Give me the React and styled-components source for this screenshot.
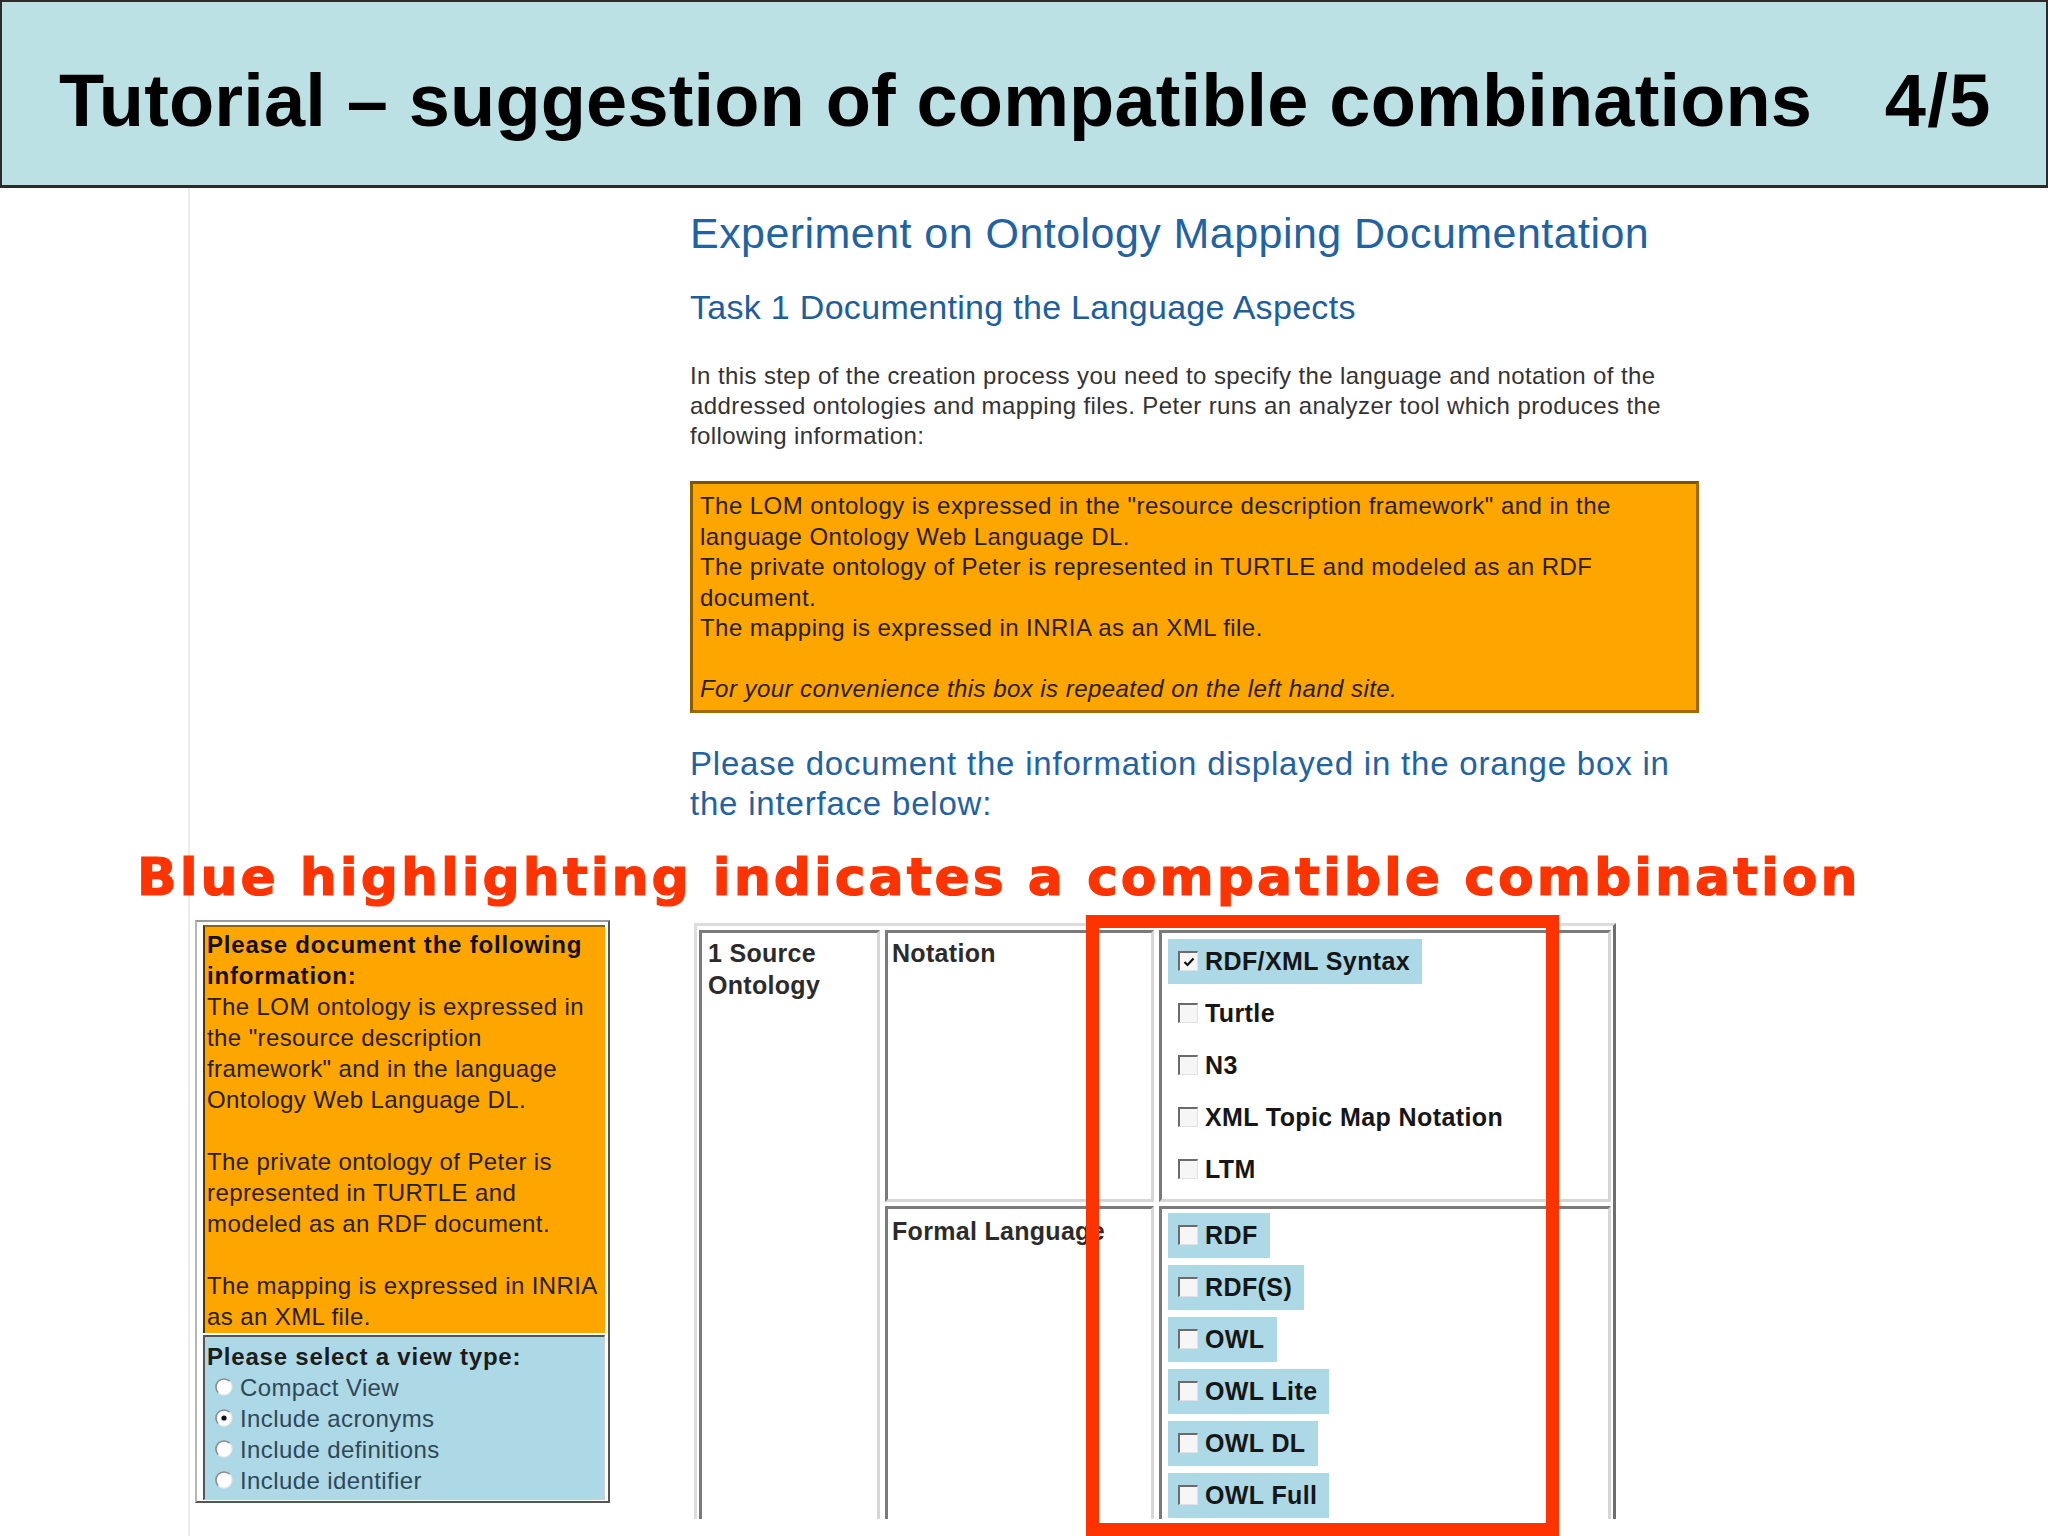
import React from "react";
import styled, { createGlobalStyle } from "styled-components";

const GlobalStyle = createGlobalStyle`
  html, body {
    margin: 0;
    padding: 0;
    background: #fff;
  }
  body {
    width: 2048px;
    height: 1536px;
    overflow: hidden;
    font-family: "Liberation Sans", Arial, sans-serif;
  }
`;

const Header = styled.header`
  box-sizing: border-box;
  height: 188px;
  background: #bbe1e4;
  border: 2px solid #2b2b2b;
  border-bottom-width: 3px;
  padding: 62px 54px 0 57px;
  display: flex;
  justify-content: space-between;
  align-items: flex-start;
`;

const Title = styled.h1`
  margin: 0;
  font: 700 74px/74px "Liberation Sans", Arial, sans-serif;
  letter-spacing: ${(p) => p.$ls || "0"};
  color: #000;
  white-space: nowrap;
`;

const Main = styled.main`
  box-sizing: border-box;
  height: 1348px;
  padding-top: 20px;
  background: linear-gradient(
    to right,
    transparent 188px,
    #ececec 188px,
    #ececec 190px,
    transparent 190px
  );
`;

const Intro = styled.section`
  margin-left: 690px;
  width: 1020px;
`;

const PageTitle = styled.h2`
  margin: 0;
  font: 400 43px/50px "Liberation Sans", Arial, sans-serif;
  letter-spacing: 0.45px;
  color: #1f63a3;
  white-space: nowrap;
`;

const TaskTitle = styled.h3`
  margin: 30px 0 0;
  font: 400 34px/38px "Liberation Sans", Arial, sans-serif;
  letter-spacing: 0.3px;
  color: #1d5e9c;
  white-space: nowrap;
`;

const Lead = styled.div`
  margin-top: 35px;
  font: 400 24px/30px "Liberation Sans", Arial, sans-serif;
  letter-spacing: 0.4px;
  color: #333;
`;

const Line = styled.div`
  white-space: nowrap;
  font-style: ${(p) => (p.$italic ? "italic" : "normal")};
`;

const InfoBox = styled.div`
  box-sizing: border-box;
  width: 1009px;
  margin-top: 30px;
  background: #ffa500;
  border: 3px solid;
  border-color: #7d5300 #a06a00 #a06a00 #8a5c00;
  padding: 7px 8px 5px 7px;
  font: 400 24px/30.5px "Liberation Sans", Arial, sans-serif;
  letter-spacing: 0.45px;
  color: #262000;
`;

const Prompt = styled.div`
  margin-top: 31px;
  font: 400 33px/40px "Liberation Sans", Arial, sans-serif;
  letter-spacing: 0.8px;
  color: #1f63a3;
`;

const Callout = styled.div`
  margin: 23px 0 0 137px;
  font: 700 52px/60px "DejaVu Sans", "Liberation Sans", sans-serif;
  letter-spacing: 3px;
  color: #ff3300;
  -webkit-text-stroke: 1.2px #ff3300;
  white-space: nowrap;
`;

const LowerRow = styled.div`
  display: flex;
  align-items: flex-start;
  gap: 84px;
  margin-top: 13px;
  padding-left: 195px;
`;

/* left hand copy of the info box */
const Panel = styled.div`
  box-sizing: border-box;
  width: 415px;
  border: 2px solid;
  border-color: #9a9a9a #555 #555 #b5b5b5;
  padding: 3px 3px 1px 6px;
  display: flex;
  flex-direction: column;
  gap: 2px;
`;

const OrangeCell = styled.div`
  background: #ffa500;
  border-top: 2px solid #8a6510;
  border-left: 2px solid #4d3a00;
  padding: 2px 2px 1px;
  font: 400 24px/31px "Liberation Sans", Arial, sans-serif;
  letter-spacing: 0.4px;
  color: #262000;
`;

const BlueCell = styled.div`
  background: #add8e6;
  border-top: 2px solid #555;
  border-left: 2px solid #555;
  border-right: 1px solid #d0d0d0;
  border-bottom: 1px solid #d0d0d0;
  padding: 4px 2px 3px;
  font: 400 24px/31px "Liberation Sans", Arial, sans-serif;
  letter-spacing: 0.4px;
  color: #2f4856;
`;

const Strong = styled.div`
  font-weight: 700;
  letter-spacing: 0.8px;
  color: ${(p) => p.$color || "#111"};
  white-space: nowrap;
`;

const RadioRow = styled.label`
  display: flex;
  align-items: center;
  gap: 7px;
  height: 31px;
  padding-left: 8px;
  white-space: nowrap;
`;

/* form table on the right */
const TableArea = styled.div`
  position: relative;
  margin-top: 3px;
`;

const TableClip = styled.div`
  height: 596px;
  overflow: hidden;
`;

const Frame = styled.div`
  display: grid;
  grid-template-columns: 181px 269px 452px;
  grid-template-rows: auto auto;
  column-gap: 5px;
  row-gap: 4px;
  padding: 4px 2px 2px;
  border: 3px solid;
  border-color: #dcdcdc #6e6e6e #6e6e6e #dcdcdc;
  width: max-content;
`;

const Cell = styled.div`
  border: 3px solid;
  border-color: #7a7a7a #d6d6d6 #d6d6d6 #7a7a7a;
  padding: ${(p) => p.$pad};
  grid-row: ${(p) => (p.$span ? "span 2" : "auto")};
`;

const Label = styled.div`
  font: 700 25px/32px "Liberation Sans", Arial, sans-serif;
  letter-spacing: 0.3px;
  color: #2b2b2b;
  white-space: nowrap;
`;

const Options = styled.div`
  display: flex;
  flex-direction: column;
  align-items: flex-start;
  gap: 7px;
`;

const Option = styled.label`
  display: inline-flex;
  align-items: center;
  gap: 7px;
  height: 45px;
  padding: 0 12px 0 10px;
  background: ${(p) => (p.$hl ? "#add8e6" : "transparent")};
  font: 700 25px/45px "Liberation Sans", Arial, sans-serif;
  letter-spacing: 0.4px;
  color: #161616;
  white-space: nowrap;
`;

const Box = styled.span`
  box-sizing: border-box;
  width: 20px;
  height: 20px;
  flex: none;
  border-top: 2px solid #6b6b6b;
  border-left: 2px solid #6b6b6b;
  border-right: 1px solid #e2e2e2;
  border-bottom: 1px solid #e2e2e2;
  background: #f6f6f6;
  display: flex;
  align-items: center;
  justify-content: center;
`;

const RedFrame = styled.div`
  position: absolute;
  left: 392px;
  top: -8px;
  width: 473px;
  height: 621px;
  box-sizing: border-box;
  border: 13px solid #ff3300;
  pointer-events: none;
`;

function Radio({ checked }) {
  return (
    <svg width="18" height="18" viewBox="0 0 18 18">
      <circle cx="9" cy="9" r="8" fill="#fff" />
      <path d="M3.3 14.7 A8 8 0 0 1 14.7 3.3" fill="none" stroke="#8a8a8a" strokeWidth="1.6" />
      <path d="M14.7 3.3 A8 8 0 0 1 3.3 14.7" fill="none" stroke="#e6e6e6" strokeWidth="1.2" />
      {checked && <circle cx="9" cy="9" r="2.6" fill="#111" />}
    </svg>
  );
}

function Check({ checked, label, hl }) {
  return (
    <Option $hl={hl}>
      <Box>
        {checked && (
          <svg width="12" height="12" viewBox="0 0 12 12">
            <path d="M1.5 6 L4.5 9 L10.5 2.5" stroke="#111" strokeWidth="2.2" fill="none" />
          </svg>
        )}
      </Box>
      {label}
    </Option>
  );
}

const leadLines = [
  "In this step of the creation process you need to specify the language and notation of the",
  "addressed ontologies and mapping files. Peter runs an analyzer tool which produces the",
  "following information:",
];

const infoLines = [
  'The LOM ontology is expressed in the "resource description framework" and in the',
  "language Ontology Web Language DL.",
  "The private ontology of Peter is represented in TURTLE and modeled as an RDF",
  "document.",
  "The mapping is expressed in INRIA as an XML file.",
  "",
];

const panelLines = [
  "The LOM ontology is expressed in",
  'the "resource description',
  'framework" and in the language',
  "Ontology Web Language DL.",
  "",
  "The private ontology of Peter is",
  "represented in TURTLE and",
  "modeled as an RDF document.",
  "",
  "The mapping is expressed in INRIA",
  "as an XML file.",
];

const viewTypes = [
  { label: "Compact View", checked: false },
  { label: "Include acronyms", checked: true },
  { label: "Include definitions", checked: false },
  { label: "Include identifier", checked: false },
];

const notations = [
  { label: "RDF/XML Syntax", checked: true, hl: true },
  { label: "Turtle" },
  { label: "N3" },
  { label: "XML Topic Map Notation" },
  { label: "LTM" },
];

const languages = ["RDF", "RDF(S)", "OWL", "OWL Lite", "OWL DL", "OWL Full"];

export default function App() {
  return (
    <>
      <GlobalStyle />
      <Header>
        <Title $ls="0.15px">Tutorial – suggestion of compatible combinations</Title>
        <Title $ls="1.5px">4/5</Title>
      </Header>
      <Main>
        <Intro>
          <PageTitle>Experiment on Ontology Mapping Documentation</PageTitle>
          <TaskTitle>Task 1 Documenting the Language Aspects</TaskTitle>
          <Lead>
            {leadLines.map((l) => (
              <Line key={l}>{l}</Line>
            ))}
          </Lead>
          <InfoBox>
            {infoLines.map((l, i) => (
              <Line key={i}>{l || "\u00a0"}</Line>
            ))}
            <Line $italic>For your convenience this box is repeated on the left hand site.</Line>
          </InfoBox>
          <Prompt>
            <Line>Please document the information displayed in the orange box in</Line>
            <Line>the interface below:</Line>
          </Prompt>
        </Intro>

        <Callout>Blue highlighting indicates a compatible combination</Callout>

        <LowerRow>
          <Panel>
            <OrangeCell>
              <Strong>Please document the following</Strong>
              <Strong>information:</Strong>
              {panelLines.map((l, i) => (
                <Line key={i}>{l || "\u00a0"}</Line>
              ))}
            </OrangeCell>
            <BlueCell>
              <Strong $color="#1c1c1c">Please select a view type:</Strong>
              {viewTypes.map((v) => (
                <RadioRow key={v.label}>
                  <Radio checked={v.checked} />
                  {v.label}
                </RadioRow>
              ))}
            </BlueCell>
          </Panel>

          <TableArea>
            <TableClip>
              <Frame>
                <Cell $span $pad="4px 6px">
                  <Label>1 Source</Label>
                  <Label>Ontology</Label>
                </Cell>
                <Cell $pad="4px 4px">
                  <Label>Notation</Label>
                </Cell>
                <Cell $pad="6px 6px 7px">
                  <Options>
                    {notations.map((n) => (
                      <Check key={n.label} {...n} />
                    ))}
                  </Options>
                </Cell>
                <Cell $pad="6px 4px">
                  <Label>Formal Language</Label>
                </Cell>
                <Cell $pad="4px 6px 12px">
                  <Options>
                    {languages.map((l) => (
                      <Check key={l} label={l} hl />
                    ))}
                  </Options>
                </Cell>
              </Frame>
            </TableClip>
            <RedFrame />
          </TableArea>
        </LowerRow>
      </Main>
    </>
  );
}
